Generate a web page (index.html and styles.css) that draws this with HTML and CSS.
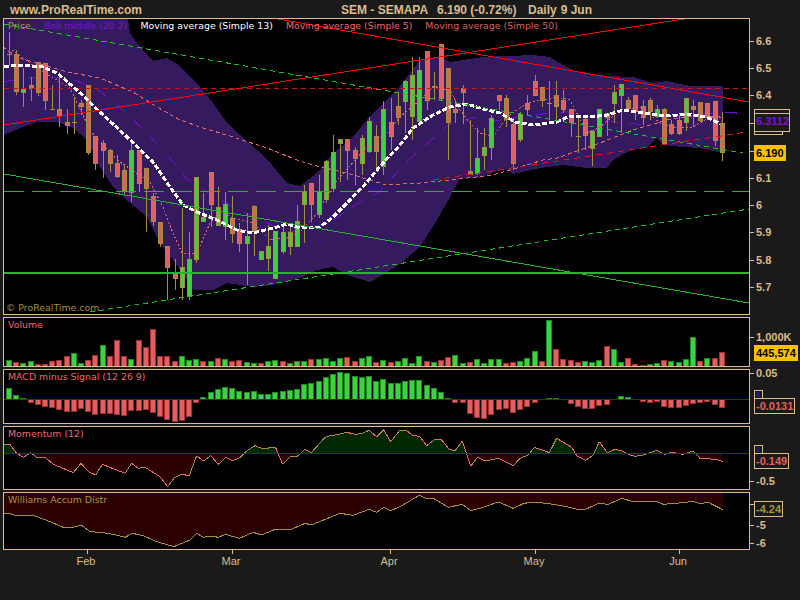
FILE: index.html
```html
<!DOCTYPE html>
<html>
<head>
  <meta charset="utf-8">
  <title>SEM - SEMAPA</title>
  <link rel="stylesheet" href="styles.css">
</head>
<body>
  <div class="header">
    <span class="site">www.ProRealTime.com</span>
    <span class="symbol">SEM - SEMAPA</span>
    <span class="quote">6.190 (-0.72%)</span>
    <span>Daily</span>
    <span>9 Jun</span>
  </div>

  <div class="rows">
    <div class="row">
      <div class="panel panel-price">
        <svg id="price" viewBox="4 19 745 295" width="745" height="295"></svg>
        <div class="legend">
          <span class="c-price">Price</span>
          <span class="c-boll">Boll middle (20 2)</span>
          <span class="c-white">Moving average (Simple 13)</span>
          <span class="c-red">Moving average (Simple 5)</span>
          <span class="c-red-dim">Moving average (Simple 50)</span>
        </div>
        <div class="copyright">© ProRealTime.com</div>
      </div>
      <div class="axis" data-top="18" id="axis-price"></div>
    </div>

    <div class="row">
      <div class="panel panel-volume">
        <svg id="volume" viewBox="4 318 745 48" width="745" height="48"></svg>
        <div class="legend"><span class="c-red">Volume</span></div>
      </div>
      <div class="axis" data-top="317" id="axis-volume"></div>
    </div>

    <div class="row">
      <div class="panel panel-macd">
        <svg id="macd" viewBox="4 370 745 53" width="745" height="53"></svg>
        <div class="legend"><span class="c-red">MACD minus Signal (12 26 9)</span></div>
      </div>
      <div class="axis" data-top="369" id="axis-macd"></div>
    </div>

    <div class="row">
      <div class="panel panel-momentum">
        <svg id="momentum" viewBox="4 427 745 62" width="745" height="62"></svg>
        <div class="legend"><span class="c-red">Momentum (12)</span></div>
      </div>
      <div class="axis" data-top="426" id="axis-momentum"></div>
    </div>

    <div class="row">
      <div class="panel panel-williams">
        <svg id="williams" viewBox="4 493 745 56" width="745" height="56"></svg>
        <div class="legend"><span class="c-price">Williams Accum Distr</span></div>
      </div>
      <div class="axis" data-top="492" id="axis-williams"></div>
    </div>
  </div>

  <div class="months" id="months"></div>

  <script src="chart.js"></script>
</body>
</html>
```

FILE: styles.css
```css
body {
  margin: 0;
  width: 800px;
  height: 600px;
  overflow: hidden;
  background-color: #1a1a1a;
  color: #dcbc8c;
  font-family: "Liberation Sans", Arial, sans-serif;
}

.header {
  display: flex;
  gap: 4px;
  height: 18px;
  padding-left: 10px;
  font-size: 12px;
  font-weight: bold;
  line-height: 20px;
  white-space: nowrap;
  box-sizing: border-box;
}

.site {
  width: 327px;
}

.symbol {
  width: 92px;
}

.quote {
  width: 87px;
}

.rows {
  display: flex;
  flex-direction: column;
  gap: 2px;
  padding-left: 3px;
}

.row {
  display: flex;
}

.panel {
  position: relative;
  flex: none;
  width: 745px;
  border: 1px solid #dcbc8c;
  background-color: #000;
}

.panel svg {
  display: block;
}

.panel-price { height: 295px; }
.panel-volume { height: 48px; }
.panel-macd { height: 53px; }
.panel-momentum { height: 62px; }
.panel-williams { height: 56px; }

.legend {
  position: absolute;
  top: 1px;
  left: 4px;
  display: flex;
  gap: 13px;
  font-family: "DejaVu Sans", sans-serif;
  font-size: 9.4px;
  line-height: 11px;
  white-space: nowrap;
}

.copyright {
  position: absolute;
  left: 2px;
  bottom: 0;
  color: #a09040;
  font-family: "DejaVu Sans", sans-serif;
  font-size: 9.4px;
  line-height: 12px;
}

.c-price { color: #a8983c; }
.c-boll { color: #7a14d0; }
.c-white { color: #fff; }
.c-red { color: #f06868; }
.c-red-dim { color: #d86464; }

/* right hand scale */
.axis {
  position: relative;
  flex: 1;
}

.tick {
  position: absolute;
  left: 0;
  width: 4px;
  height: 1px;
  background-color: #dcbc8c;
}

.scale-label {
  position: absolute;
  left: 6px;
  font-size: 11px;
  font-weight: bold;
  line-height: 12px;
}

.tag {
  position: absolute;
  left: 4px;
  box-sizing: border-box;
  height: 16px;
  padding: 0 1px;
  border: 1px solid #dcbc8c;
  background-color: #1a1a1a;
  font-size: 11px;
  font-weight: bold;
  line-height: 15px;
  white-space: nowrap;
}

.tag-stub {
  width: 9px;
  height: 8px;
  border-bottom: none;
  color: #2020d0;
  font-size: 7px;
  line-height: 7px;
  text-align: center;
}

.tag-stack-top {
  width: 36px;
  height: 8px;
}

.tag-stack-bottom {
  width: 29px;
  height: 10px;
}

.tag-boll {
  width: 36px;
  height: 19px;
  color: #7a14d0;
  line-height: 14px;
}

.tag-last {
  border-color: #ffc000;
  background-color: #ffc000;
  color: #000;
}

.tag-red { color: #e86060; }
.tag-olive { color: #a8983c; }

/* month scale */
.months {
  position: relative;
  height: 20px;
}

.month {
  position: absolute;
  top: 0;
  width: 1px;
  height: 4px;
  background-color: #dcbc8c;
}

.month span {
  position: absolute;
  top: 5px;
  left: -21px;
  width: 40px;
  font-size: 11px;
  line-height: 12px;
  text-align: center;
}

/* chart lines */
svg {
  shape-rendering: crispEdges;
}

.band { fill: #361a60; }
.line { fill: none; }
.line-red { stroke: #f00; }
.line-red-dash { stroke: #c81414; stroke-dasharray: 5 4; }
.line-red-rise { stroke: #e81010; stroke-dasharray: 6 5; }
.line-green { stroke: #30b030; }
.line-green-thick { stroke: #30b030; stroke-width: 2; }
.line-green-long { stroke: #30b030; stroke-dasharray: 20 8; }
.line-green-dash { stroke: #20c020; stroke-dasharray: 5 4; }
.line-white { stroke: #fff; stroke-width: 3; stroke-dasharray: 5 2; }
.line-sma5 { stroke: #e06868; stroke-dasharray: 2 2; }
.line-sma50 { stroke: #e06868; stroke-dasharray: 4 3; }
.line-boll { stroke: #7010c0; stroke-dasharray: 12 12; }
.line-zero { stroke: #2020d0; }
.line-olive { stroke: #a09040; }
.line-up { stroke: #a09040; }
.line-down { stroke: #f06868; }

.wick { fill: #a09040; }
.body-edge { fill: #a09040; }
.body-up { fill: #40d040; }
.body-down { fill: #e06060; }

.bar-up { fill: #40d040; stroke: #1c8c1c; }
.bar-down { fill: #e06060; stroke: #a03030; }

.area-up { fill: #002800; }
.area-down { fill: #2c0000; }
```

FILE: chart.js
```js
var SVG_NS = "http://www.w3.org/2000/svg";

// bar position on the time scale
function barX(i) {
  return Math.round(9 + 7.2 * i);
}

function add(svg, name, attrs) {
  var el = document.createElementNS(SVG_NS, name);
  for (var key in attrs) {
    el.setAttribute(key, attrs[key]);
  }
  svg.appendChild(el);
  return el;
}

function polyline(svg, pts, cls) {
  add(svg, "polyline", {
    points: pts.map(function(p) { return p.join(","); }).join(" "),
    "class": "line " + cls
  });
}

// values below were read off the 3x crops
function scaled(pts, ox, oy) {
  return pts.map(function(p) { return [ox + p[0] / 3, oy + p[1] / 3]; });
}

// ---- price panel ----
var price = document.getElementById("price");

var bandTop = [[4,19],[128,19],[130,33],[140,47],[153,61],[167,58],[180,66],[200,87],[213,103],[227,123],[240,135],[267,159],[287,183],[300,186],[317,173],[333,153],[350,140],[367,120],[383,103],[400,86],[410,73],[420,60],[440,57],[450,62],[483,57],[533,55],[550,57],[563,65],[577,72],[607,76],[633,77],[653,83],[667,81],[690,86],[723,86]];
var bandBottom = [[723,153],[700,148],[683,147],[663,145],[657,138],[647,147],[633,150],[623,154],[613,160],[607,168],[587,168],[563,165],[540,168],[513,174],[507,169],[497,171],[480,178],[460,178],[450,197],[437,220],[420,247],[400,264],[383,275],[370,282],[347,275],[333,267],[317,270],[300,278],[273,285],[253,287],[227,283],[213,290],[193,290],[187,280],[173,260],[160,243],[147,217],[123,197],[113,187],[100,167],[87,140],[73,128],[57,122],[37,122],[20,128],[4,135]];
add(price, "polygon", {
  points: bandTop.concat(bandBottom).map(function(p) { return p.join(","); }).join(" "),
  "class": "band"
});

var bollMiddle = scaled([[12,245],[75,235],[150,230],[220,238],[295,270],[360,322],[437,395],[503,467],[562,538],[637,585],[705,625],[782,660],[860,695],[925,690],[1000,660],[1065,615],[1137,577],[1210,495],[1270,440],[1345,375],[1420,352],[1490,362],[1600,345],[1700,335],[1770,350],[1850,368],[1950,375],[2050,350],[2120,340],[2200,338],[2265,345],[2335,350]], 0, 0);
polyline(price, bollMiddle, "line-boll");

// high, low, body top, body bottom, colour (u green, d red)
var candles = [
  [32,65,54,55,"u"],[50,95,54,92,"d"],[68,107,89,93,"u"],[77,101,85,89,"d"],[62,96,62,93,"d"],
  [63,110,63,101,"d"],[85,109,109,110,"u"],[72,127,109,117,"d"],[109,134,122,126,"d"],[97,134,122,123,"u"],
  [100,115,103,107,"d"],[85,155,85,153,"d"],[136,170,136,164,"d"],[140,178,143,151,"d"],[149,172,150,164,"d"],
  [155,178,163,177,"d"],[165,195,170,191,"d"],[140,202,150,193,"u"],[150,192,150,184,"d"],[168,232,168,189,"d"],
  [193,226,196,222,"d"],[222,247,222,244,"d"],[246,300,246,268,"d"],[259,290,274,279,"d"],[208,300,267,288,"u"],
  [232,300,259,297,"u"],[177,263,177,260,"u"],[193,222,217,222,"u"],[172,227,172,205,"d"],[187,226,207,226,"u"],
  [192,240,204,227,"u"],[196,243,218,234,"d"],[223,252,229,244,"d"],[213,285,236,244,"u"],[205,256,206,232,"d"],
  [251,260,251,260,"u"],[225,271,246,259,"u"],[231,279,231,279,"u"],[225,254,232,252,"u"],[225,255,232,247,"u"],
  [205,247,221,247,"u"],[185,243,191,205,"u"],[183,222,183,205,"d"],[175,218,191,215,"u"],[160,203,161,200,"u"],
  [135,192,152,189,"u"],[139,182,139,144,"u"],[139,180,139,151,"d"],[147,185,150,159,"d"],[135,175,138,164,"u"],
  [117,153,121,152,"u"],[125,170,136,152,"d"],[101,175,109,167,"u"],[98,150,122,137,"d"],[93,125,106,118,"d"],
  [80,133,81,102,"u"],[57,140,75,117,"u"],[57,125,70,122,"u"],[51,110,51,101,"d"],[72,100,86,87,"d"],
  [44,100,44,99,"d"],[68,160,68,123,"d"],[100,123,109,113,"d"],[85,124,88,93,"d"],[120,175,171,175,"d"],
  [128,175,158,174,"u"],[128,170,147,156,"u"],[115,160,118,148,"u"],[95,110,95,101,"d"],[95,127,98,120,"d"],
  [118,170,124,164,"d"],[112,142,114,140,"u"],[95,115,103,110,"d"],[75,96,81,96,"d"],[87,107,87,101,"d"],
  [81,120,103,104,"u"],[81,120,95,107,"d"],[90,113,100,110,"d"],[109,137,109,123,"d"],[115,153,136,137,"u"],
  [117,150,119,136,"d"],[131,166,131,149,"u"],[109,137,109,137,"u"],[113,136,113,118,"d"],[85,123,92,104,"u"],
  [84,133,84,96,"u"],[97,112,100,109,"d"],[95,120,95,112,"d"],[100,125,106,118,"d"],[98,120,100,112,"d"],
  [105,118,109,117,"u"],[108,145,109,144,"d"],[120,135,124,134,"d"],[115,135,120,134,"d"],[98,131,98,123,"u"],
  [100,127,106,110,"d"],[102,122,102,121,"d"],[103,120,103,118,"d"],[101,146,101,141,"d"],[112,161,123,153,"d"]
];

candles.forEach(function(c, i) {
  var x = barX(i);
  add(price, "rect", { x: x, y: c[0], width: 1, height: c[1] - c[0], "class": "wick" });
  var h = Math.max(c[3] - c[2], 1);
  add(price, "rect", { x: x - 2, y: c[2], width: 5, height: h, "class": "body-edge" });
  if (h > 2) {
    add(price, "rect", {
      x: x - 1, y: c[2] + 1, width: 3, height: h - 2,
      "class": c[4] == "u" ? "body-up" : "body-down"
    });
  }
});

polyline(price, [[4,88],[749,88]], "line-red-dash");
polyline(price, [[4,191],[749,191]], "line-green-long");

var sma50 = [[3,47],[17,57],[33,62],[67,72],[100,78],[133,92],[157,107],[180,120],[200,127],[233,137],[267,148],[297,160],[313,165],[350,174],[383,184],[400,184],[420,183],[450,180],[467,178],[493,175],[517,168],[543,160],[557,158],[600,143],[633,130],[667,120],[700,115],[720,117]];
polyline(price, sma50, "line-sma50");

var sma5 = [[12,50],[40,70],[70,88],[90,130],[117,160],[150,182],[163,207],[173,233],[182,253],[197,253],[210,223],[220,212],[233,218],[253,223],[270,240],[287,238],[300,232],[317,213],[337,180],[367,147],[387,133],[400,117],[420,100],[433,87],[450,90],[460,110],[470,123],[480,133],[493,137],[507,117],[527,103],[557,97],[570,100],[587,133],[600,127],[620,110],[640,107],[660,123],[673,127],[693,127],[710,117],[723,117]];
polyline(price, sma5, "line-sma5");

var sma13 = [[4,67],[17,65],[43,67],[57,73],[77,90],[100,112],[127,137],[153,162],[170,187],[183,205],[197,212],[217,220],[237,230],[253,233],[277,227],[287,224],[300,228],[320,227],[333,217],[350,200],[367,182],[383,163],[400,145],[413,128],[433,115],[450,107],[467,104],[483,109],[500,113],[515,122],[533,125],[557,122],[570,116],[590,117],[607,115],[623,110],[643,113],[667,116],[687,114],[707,117],[720,124]];
polyline(price, sma13, "line-white");

polyline(price, [[4,125],[690,18]], "line-red");
polyline(price, [[278,19],[749,102]], "line-red");
polyline(price, [[433,180],[747,132]], "line-red-rise");
polyline(price, [[4,24],[743,153]], "line-green-dash");
polyline(price, [[90,312],[749,209]], "line-green-dash");
polyline(price, [[4,174],[749,303]], "line-green");
polyline(price, [[4,273],[749,273]], "line-green-thick");

// ---- volume panel ----
var volume = document.getElementById("volume");
var volumeTops = [135,141,144,138,147,147,138,135,123,114,144,135,120,90,123,75,123,132,75,96,42,123,123,138,123,135,132,138,138,129,132,138,135,141,144,144,138,135,138,144,138,138,132,132,129,138,129,126,138,129,123,141,135,141,138,129,144,123,138,141,135,126,120,144,141,132,144,132,132,144,141,138,129,108,138,15,102,132,135,141,138,141,135,93,102,141,129,147,150,147,144,135,138,141,132,66,138,129,129,111];
var volumeRed = [1,4,5,6,7,8,11,12,14,15,16,18,19,20,21,22,23,27,29,31,32,35,38,42,47,48,51,53,58,60,61,64,69,70,74,76,77,78,79,83,86,87,88,91,96,98,99];

volumeTops.forEach(function(t, i) {
  var top = Math.round(315 + t / 3);
  add(volume, "rect", {
    x: barX(i) - 2.5, y: top + 0.5, width: 5, height: 366 - top,
    "class": volumeRed.indexOf(i) >= 0 ? "bar-down" : "bar-up"
  });
});

// ---- macd panel ----
var macd = document.getElementById("macd");
var macdEnds = [219,240,249,261,267,273,276,282,288,288,279,288,297,294,294,297,300,285,285,282,291,303,312,318,315,303,261,246,231,222,216,219,228,231,228,237,237,231,228,225,222,207,204,198,186,177,171,174,183,186,183,198,192,204,204,198,195,195,210,219,231,249,261,261,294,306,309,297,282,279,291,282,273,261,253,249,249,253,264,273,279,279,270,267,253,243,246,253,258,261,258,273,276,276,270,264,261,258,267,276];
var macdZero = 399;

macdEnds.forEach(function(v, i) {
  if (v == 253) return;
  var end = Math.round(315 + v / 3);
  var top = Math.min(end, macdZero);
  add(macd, "rect", {
    x: barX(i) - 2.5, y: top + 0.5, width: 5, height: Math.abs(end - macdZero),
    "class": v < 253 ? "bar-up" : "bar-down"
  });
});
polyline(macd, [[4,399.5],[749,399.5]], "line-zero");

// ---- momentum panel ----
var momentum = document.getElementById("momentum");
var momentumLine = scaled([[12,60],[30,58],[50,85],[70,97],[92,83],[110,97],[135,97],[160,118],[220,143],[243,115],[265,140],[287,150],[307,118],[375,145],[395,115],[415,130],[435,127],[480,155],[503,185],[523,158],[545,148],[568,152],[590,92],[610,108],[632,92],[655,118],[677,97],[697,107],[718,100],[740,78],[765,62],[785,70],[827,68],[848,118],[873,93],[893,93],[915,73],[934,83],[977,35],[1020,27],[1040,22],[1065,28],[1085,26],[1107,16],[1130,35],[1151,14],[1172,50],[1200,15],[1218,15],[1236,30],[1260,35],[1280,62],[1305,43],[1325,45],[1348,73],[1365,77],[1387,48],[1412,124],[1432,97],[1455,108],[1495,100],[1540,122],[1560,100],[1585,90],[1603,67],[1648,83],[1670,40],[1715,67],[1730,92],[1757,106],[1780,90],[1798,50],[1822,83],[1845,73],[1865,77],[1890,90],[1905,94],[1930,90],[1970,76],[1995,88],[2015,82],[2050,88],[2080,78],[2100,100],[2150,103],[2168,110]], 0, 425);
var momentumZero = 453;

var defs = add(momentum, "defs", {});
var clipUp = add(defs, "clipPath", { id: "above-zero" });
add(clipUp, "rect", { x: 4, y: 427, width: 745, height: momentumZero - 427 });
var clipDown = add(defs, "clipPath", { id: "below-zero" });
add(clipDown, "rect", { x: 4, y: momentumZero, width: 745, height: 489 - momentumZero });

var momentumArea = [[4, momentumZero]].concat(momentumLine, [[722, momentumZero]]);
var areaPoints = momentumArea.map(function(p) { return p.join(","); }).join(" ");
add(momentum, "polygon", { points: areaPoints, "class": "area-up", "clip-path": "url(#above-zero)" });
add(momentum, "polygon", { points: areaPoints, "class": "area-down", "clip-path": "url(#below-zero)" });

for (var i = 1; i < momentumLine.length; i++) {
  var a = momentumLine[i - 1];
  var b = momentumLine[i];
  polyline(momentum, [a, b], b[1] > a[1] ? "line-down" : "line-up");
}
polyline(momentum, [[4,453.5],[749,453.5]], "line-zero");

// ---- williams panel ----
var williams = document.getElementById("williams");
var williamsLine = scaled([[12,267],[27,265],[50,273],[100,271],[150,290],[190,307],[220,307],[243,300],[270,320],[300,322],[340,328],[375,337],[397,325],[430,332],[470,350],[522,365],[570,345],[590,325],[610,337],[632,333],[655,337],[677,328],[718,340],[760,322],[785,330],[825,313],[873,313],[915,295],[934,300],[1020,265],[1060,271],[1107,253],[1130,262],[1151,247],[1172,257],[1200,245],[1258,211],[1280,222],[1300,220],[1345,247],[1387,238],[1412,257],[1440,250],[1495,231],[1540,250],[1572,235],[1603,231],[1648,236],[1700,245],[1735,254],[1755,254],[1795,235],[1825,238],[1865,220],[1900,230],[1970,229],[1990,238],[2050,233],[2080,229],[2100,236],[2125,232],[2168,254]], 0, 425);
add(williams, "polygon", {
  points: [[4,493]].concat(williamsLine, [[723,493]]).map(function(p) { return p.join(","); }).join(" "),
  "class": "area-down"
});
polyline(williams, williamsLine, "line-olive");

// ---- right hand scales ----
// y is given in page pixels, each axis knows where its row starts
function scale(axisId, ticks, tags) {
  var axis = document.getElementById(axisId);
  var rowTop = parseInt(axis.dataset.top);
  ticks.forEach(function(t) {
    var tick = document.createElement("div");
    tick.className = "tick";
    tick.style.top = (t[1] - rowTop) + "px";
    axis.appendChild(tick);
    if (t[0]) {
      var label = document.createElement("div");
      label.className = "scale-label";
      label.textContent = t[0];
      label.style.top = (t[1] - rowTop - 6) + "px";
      axis.appendChild(label);
    }
  });
  tags.forEach(function(t) {
    var tag = document.createElement("div");
    tag.className = "tag " + t.cls;
    tag.textContent = t.text;
    tag.style.top = (t.y - rowTop) + "px";
    axis.appendChild(tag);
  });
}

scale("axis-price",
  [["6.6",41],["6.5",68],["6.4",95],["",123],["",151],["6.1",178],["6",205],["5.9",232],["5.8",260],["5.7",287]],
  [
    { text: "", cls: "tag-stack-top", y: 109 },
    { text: "", cls: "tag-stack-bottom", y: 125 },
    { text: "6.3112", cls: "tag-boll", y: 113 },
    { text: "6.190", cls: "tag-last", y: 145 }
  ]);
scale("axis-volume", [["1,000K",337]], [{ text: "445,574", cls: "tag-last", y: 345 }]);
scale("axis-macd", [["0.05",373]], [
  { text: "0", cls: "tag-stub", y: 390 },
  { text: "-0.0131", cls: "tag-red", y: 398 }
]);
scale("axis-momentum", [["-0.5",481]], [
  { text: "0", cls: "tag-stub", y: 445 },
  { text: "-0.149", cls: "tag-red", y: 453 }
]);
scale("axis-williams", [["",504],["-5",525],["-6",543]], [{ text: "-4.24", cls: "tag-olive", y: 501 }]);

// ---- month scale ----
var months = document.getElementById("months");
[["Feb",87],["Mar",232],["Apr",390],["May",535],["Jun",679]].forEach(function(m) {
  var mark = document.createElement("div");
  mark.className = "month";
  mark.style.left = m[1] + "px";
  var text = document.createElement("span");
  text.textContent = m[0];
  mark.appendChild(text);
  months.appendChild(mark);
});
```
